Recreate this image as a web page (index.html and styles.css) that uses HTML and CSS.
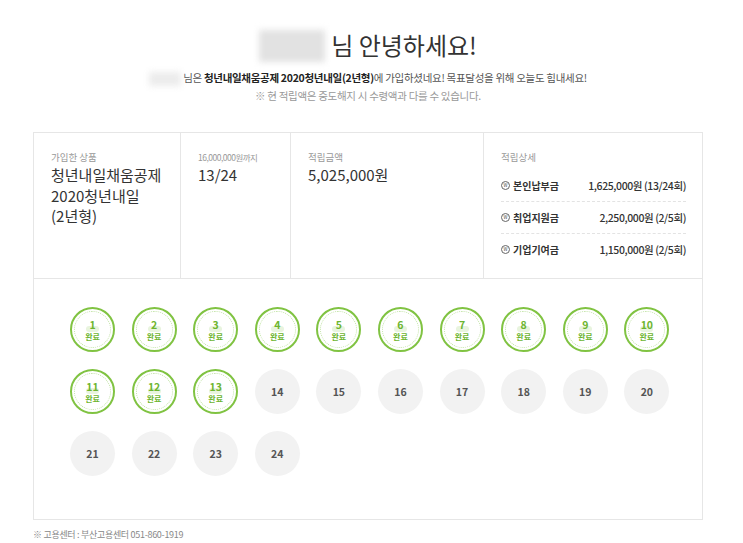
FILE: index.html
```html
<html>
<head>
<title>적립 현황</title>
<link rel="stylesheet" href="styles.css">
</head>
<body>
<div class="page">
  <div class="greet">
    <h1 class="hello"><span class="blur big"></span>님 안녕하세요!</h1>
    <p class="intro"><span class="blur small"></span>님은 <b>청년내일채움공제 2020청년내일(2년형)</b>에 가입하셨네요! 목표달성을 위해 오늘도 힘내세요!</p>
    <p class="notice">※ 현 적립액은 중도해지 시 수령액과 다를 수 있습니다.</p>
  </div>

  <div class="box">
    <div class="summary">
      <div class="cell c1">
        <div class="label">가입한 상품</div>
        <div class="value">청년내일채움공제<br>2020청년내일<br>(2년형)</div>
      </div>
      <div class="cell c2">
        <div class="label tiny">16,000,000원까지</div>
        <div class="value">13/24</div>
      </div>
      <div class="cell c3">
        <div class="label">적립금액</div>
        <div class="value">5,025,000원</div>
      </div>
      <div class="cell c4">
        <div class="label">적립상세</div>
        <ul class="detail">
          <li><span class="name"><i class="won">W</i>본인납부금</span><span class="amt">1,625,000원 (13/24회)</span></li>
          <li><span class="name"><i class="won">W</i>취업지원금</span><span class="amt">2,250,000원 (2/5회)</span></li>
          <li><span class="name"><i class="won">W</i>기업기여금</span><span class="amt">1,150,000원 (2/5회)</span></li>
        </ul>
      </div>
    </div>

    <div class="rounds">
      <div class="dot done"><b>1</b><small>완료</small></div>
      <div class="dot done"><b>2</b><small>완료</small></div>
      <div class="dot done"><b>3</b><small>완료</small></div>
      <div class="dot done"><b>4</b><small>완료</small></div>
      <div class="dot done"><b>5</b><small>완료</small></div>
      <div class="dot done"><b>6</b><small>완료</small></div>
      <div class="dot done"><b>7</b><small>완료</small></div>
      <div class="dot done"><b>8</b><small>완료</small></div>
      <div class="dot done"><b>9</b><small>완료</small></div>
      <div class="dot done"><b>10</b><small>완료</small></div>
      <div class="dot done"><b>11</b><small>완료</small></div>
      <div class="dot done"><b>12</b><small>완료</small></div>
      <div class="dot done"><b>13</b><small>완료</small></div>
      <div class="dot"><b>14</b></div>
      <div class="dot"><b>15</b></div>
      <div class="dot"><b>16</b></div>
      <div class="dot"><b>17</b></div>
      <div class="dot"><b>18</b></div>
      <div class="dot"><b>19</b></div>
      <div class="dot"><b>20</b></div>
      <div class="dot"><b>21</b></div>
      <div class="dot"><b>22</b></div>
      <div class="dot"><b>23</b></div>
      <div class="dot"><b>24</b></div>
    </div>
  </div>

  <p class="foot">※ 고용센터 : 부산고용센터 051-860-1919</p>
</div>
</body>
</html>
```

FILE: styles.css
```css
body { margin:0; background:#fff; color:#333; font-family:"Noto Sans CJK KR", "Noto Sans", sans-serif; }
.page { width:670px; margin-left:33px; }

/* greeting */
.greet { text-align:center; padding-top:27px; height:132px; box-sizing:border-box; }
.hello { margin:0; font-size:24px; font-weight:400; line-height:36px; color:#333; }
.intro { margin:7px 0 0; font-size:10.5px; line-height:15px; color:#555; letter-spacing:-0.3px; }
.intro b { color:#222; font-weight:700; }
.notice { margin:2px 0 0; font-size:10.5px; line-height:15px; color:#999; letter-spacing:-0.3px; }
.blur { display:inline-block; vertical-align:middle; background:#e2e2e2; filter:blur(3px); }
.blur.big { width:66px; height:32px; margin-right:6px; margin-top:-4px; }
.blur.small { width:32px; height:14px; margin-right:2px; background:#ececec; }

/* main box */
.box { border:1px solid #e6e6e6; }
.summary { display:flex; height:145px; border-bottom:1px solid #e6e6e6; }
.cell { box-sizing:border-box; padding:17px 0 0 17px; border-left:1px solid #e6e6e6; }
.cell:first-child { border-left:none; }
.c1 { width:146px; }
.c2 { width:110px; }
.c3 { width:193px; }
.c4 { flex:1; padding-right:16px; }
.label { font-size:9.5px; line-height:14px; color:#999; }
.label.tiny { font-size:8.5px; letter-spacing:-0.5px; }
.value { margin-top:1px; font-size:15px; line-height:20.5px; color:#333; }

.detail { list-style:none; margin:6px 0 0; padding:0; }
.detail li { display:flex; justify-content:space-between; align-items:center; height:31px; border-bottom:1px dashed #e3e3e3; font-size:10.5px; color:#333; }
.detail li:last-child { border-bottom:none; }
.name { font-weight:700; font-size:10px; display:flex; align-items:center; }
.amt { letter-spacing:-0.4px; font-weight:500; }
.won { display:inline-block; width:7px; height:7px; border:1px solid #666; border-radius:50%; font-size:4.5px; line-height:7px; text-align:center; font-style:normal; font-weight:400; color:#444; margin-right:3px; }

/* rounds */
.rounds { display:grid; grid-template-columns:repeat(10, 45px); column-gap:16.6px; row-gap:17px; padding:28px 0 43px 36px; }
.dot { width:45px; height:45px; border-radius:50%; background:#f2f2f2; box-sizing:border-box; display:flex; flex-direction:column; align-items:center; justify-content:center; }
.dot b { font-size:10.5px; line-height:13px; color:#555; font-weight:700; }
.dot.done { position:relative; background:#fff; border:2px solid #80c342; }
.dot.done::before { content:""; position:absolute; left:2px; top:2px; right:2px; bottom:2px; border:1px dotted #bfe2a2; border-radius:50%; }
.dot.done::after { content:""; position:absolute; left:14px; top:17px; width:13px; height:6px; border-radius:3px; background:#e8f4de; }
.dot.done b { position:relative; z-index:1; color:#6db52f; }
.dot.done small { position:relative; z-index:1; font-size:8px; line-height:11px; color:#6db52f; font-weight:700; }

.foot { margin:9px 0 0; font-size:9px; line-height:12px; color:#888; letter-spacing:-0.3px; }
```
